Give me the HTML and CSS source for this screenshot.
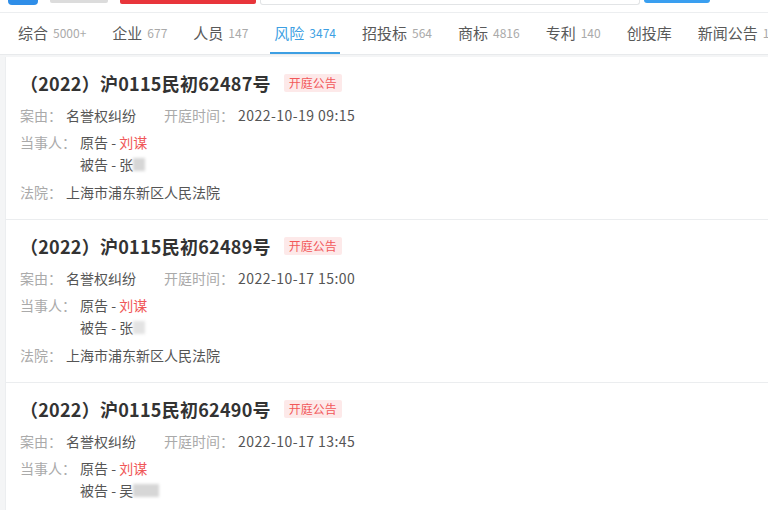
FILE: index.html
```html
<!DOCTYPE html>
<html lang="zh-CN">
<head>
<meta charset="utf-8">
<link rel="stylesheet" href="styles.css">
</head>
<body>
<div class="header">
  <div class="logo"></div>
  <div class="brand"></div>
  <div class="redbox"></div>
  <div class="search"></div>
  <div class="btn"></div>
</div>
<nav class="tabs">
  <a class="tab">综合<span class="num">5000+</span></a>
  <a class="tab">企业<span class="num">677</span></a>
  <a class="tab">人员<span class="num">147</span></a>
  <a class="tab active">风险<span class="num">3474</span></a>
  <a class="tab">招投标<span class="num">564</span></a>
  <a class="tab">商标<span class="num">4816</span></a>
  <a class="tab">专利<span class="num">140</span></a>
  <a class="tab">创投库</a>
  <a class="tab">新闻公告<span class="num">1</span></a>
</nav>
<div class="list">
  <div class="card">
    <div class="title">（2022）沪0115民初62487号<span class="badge">开庭公告</span></div>
    <div class="row first"><span class="label">案由：</span><span class="val">名誉权纠纷</span><span class="label gapl">开庭时间：</span><span class="val date">2022-10-19 09:15</span></div>
    <div class="row parties"><span class="label">当事人：</span><div class="plist"><div>原告 - <span class="red">刘谋</span></div><div>被告 - 张<span class="blur w1"></span></div></div></div>
    <div class="row"><span class="label">法院：</span><span class="val">上海市浦东新区人民法院</span></div>
  </div>
  <div class="card">
    <div class="title">（2022）沪0115民初62489号<span class="badge">开庭公告</span></div>
    <div class="row first"><span class="label">案由：</span><span class="val">名誉权纠纷</span><span class="label gapl">开庭时间：</span><span class="val date">2022-10-17 15:00</span></div>
    <div class="row parties"><span class="label">当事人：</span><div class="plist"><div>原告 - <span class="red">刘谋</span></div><div>被告 - 张<span class="blur w1 light"></span></div></div></div>
    <div class="row"><span class="label">法院：</span><span class="val">上海市浦东新区人民法院</span></div>
  </div>
  <div class="card">
    <div class="title">（2022）沪0115民初62490号<span class="badge">开庭公告</span></div>
    <div class="row first"><span class="label">案由：</span><span class="val">名誉权纠纷</span><span class="label gapl">开庭时间：</span><span class="val date">2022-10-17 13:45</span></div>
    <div class="row parties"><span class="label">当事人：</span><div class="plist"><div>原告 - <span class="red">刘谋</span></div><div>被告 - 吴<span class="blur w2"></span></div></div></div>
  </div>
</div>
</body>
</html>
```
FILE: styles.css
```css
* { box-sizing: border-box; }
html, body { margin: 0; padding: 0; }
body {
  width: 768px;
  height: 510px;
  overflow: hidden;
  background: #f4f5f6;
  font-family: "Noto Sans CJK SC", "Noto Sans", sans-serif;
  color: #555;
}
.header {
  height: 13px;
  background: #fff;
  border-bottom: 1px solid #eceef0;
  display: flex;
  align-items: flex-start;
  overflow: hidden;
  padding-left: 8px;
}
.logo {
  width: 30px;
  height: 5px;
  background: #2f8ee8;
  border-radius: 0 0 4px 4px;
}
.brand {
  margin-left: 12px;
  width: 58px;
  height: 3px;
  background: #dcdcdc;
  border-radius: 0 0 2px 2px;
}
.redbox {
  margin-left: 12px;
  width: 136px;
  height: 4px;
  background: #e8353b;
  border-radius: 0 0 2px 2px;
}
.search {
  margin-left: 4px;
  width: 380px;
  height: 5px;
  border: 1px solid #e2e4e6;
  border-top: none;
  border-radius: 0 0 3px 3px;
}
.btn {
  margin-left: 4px;
  width: 66px;
  height: 3px;
  background: #3a9ff0;
  border-radius: 0 0 3px 3px;
}
.tabs {
  height: 42px;
  background: #fff;
  border-bottom: 1px solid #e8eaec;
  display: flex;
  align-items: stretch;
  padding-left: 14px;
  gap: 18px;
  white-space: nowrap;
  overflow: hidden;
}
.tab {
  display: flex;
  align-items: center;
  padding: 0 4px;
  font-size: 15px;
  color: #595959;
  border-bottom: 2px solid transparent;
}
.tab.active {
  color: #3d9fe3;
  border-bottom-color: #3d9fe3;
}
.num {
  font-size: 12px;
  color: #aaa;
  margin-left: 5px;
}
.tab.active .num { color: #3d9fe3; }
.list {
  margin-top: 2px;
  margin-left: 5px;
  background: #fff;
  border-left: 1px solid #eceef0;
}
.card {
  padding: 14px 0 16px 14px;
  border-bottom: 1px solid #ebedef;
}
.title {
  display: flex;
  align-items: center;
  height: 24px;
  font-size: 18px;
  font-weight: bold;
  color: #333;
  letter-spacing: 0.25px;
}
.badge {
  margin-left: 13px;
  font-size: 12px;
  font-weight: normal;
  letter-spacing: 0;
  line-height: 18px;
  padding: 0 5px;
  background: #fde9e9;
  color: #f2585a;
  border-radius: 2px;
}
.row {
  display: flex;
  font-size: 14px;
  line-height: 22px;
  margin-top: 6px;
}
.row.first { margin-top: 9px; }
.row.parties { margin-top: 5px; }
.label {
  color: #aaa;
  margin-right: 4px;
}
.gapl { margin-left: 28px; }
.val { color: #555; }
.date { letter-spacing: 0.45px; }
.plist { color: #555; }
.red { color: #f05858; }
.blur {
  display: inline-block;
  vertical-align: middle;
  height: 13px;
  background: #d6d6d6;
  filter: blur(1.5px);
  margin-top: -3px;
}
.blur.light { background: #e3e3e3; }
.w1 { width: 12px; }
.w2 { width: 26px; }
```
